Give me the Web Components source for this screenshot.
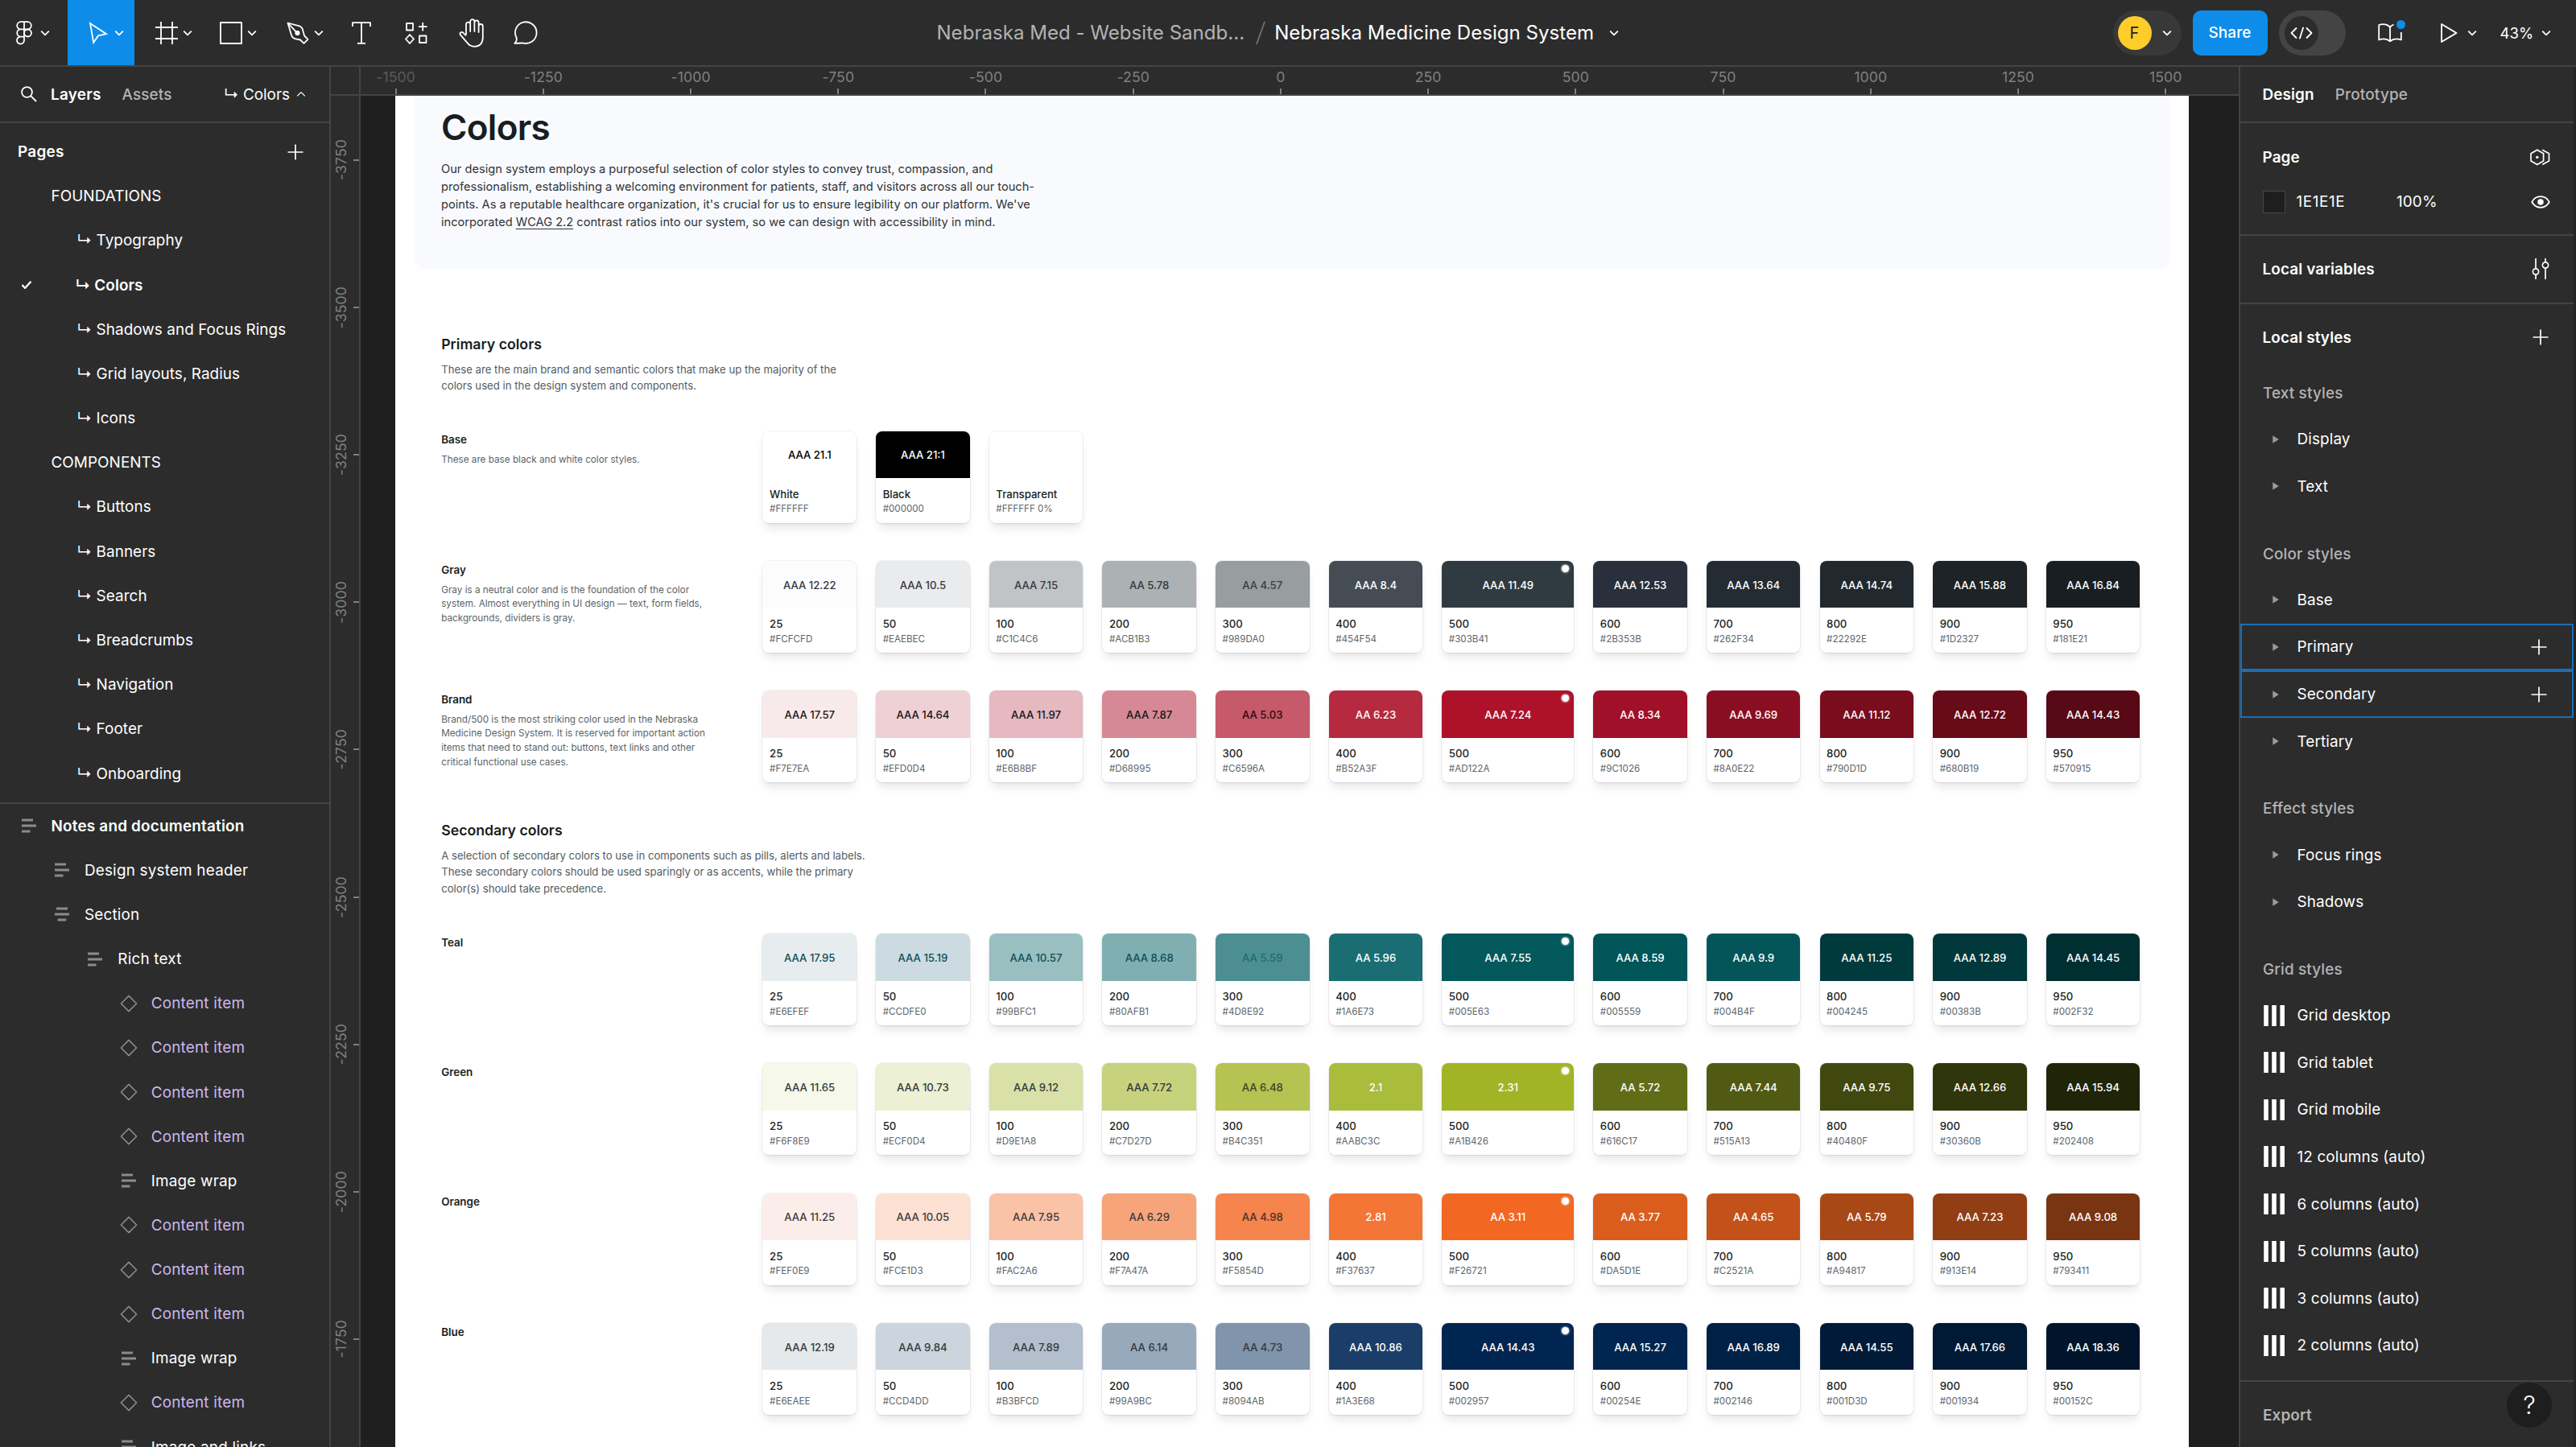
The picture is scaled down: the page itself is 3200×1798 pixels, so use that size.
<!DOCTYPE html>
<html lang="en">
<head>
<meta charset="utf-8">
<title>Nebraska Medicine Design System</title>
<style>
  html, body { margin: 0; height: 100%; background: #2c2c2c; overflow: hidden; }
  body { font-family: Inter, "Liberation Sans", sans-serif; font-size: 18.9px; letter-spacing: .12px; color: #fff; }
</style>
</head>
<body>
<design-app></design-app>

<script>
const icons = {
  logo: [20, 30, '<path d="M10 1.2H5.8a4.4 4.4 0 0 0 0 9.2H10zM10 1.2h4.2a4.4 4.4 0 0 1 0 9.2H10zM10 10.4H5.8a4.4 4.4 0 0 0 0 9.2H10zM10 19.6H5.8a4.5 4.5 0 1 0 4.2 4.6z"/><circle cx="14.5" cy="15" r="4.5"/>', 1.8],
  chevron: [12, 12, '<path d="M1.2 3.6 6 8.4l4.8-4.8"/>', 1.8],
  caretup: [12, 12, '<path d="M1.2 8.4 6 3.6l4.8 4.8"/>', 1.3],
  move: [24, 28, '<path d="M2 2 22 15.2 12 17.4 6.2 26z" stroke-linejoin="miter"/>', 1.8],
  frame: [28, 28, '<path d="M7 0v28M21 0v28M0 7h28M0 21h28"/>', 1.8],
  rect: [28, 28, '<path d="M1 1h26v26H1z"/>', 1.8],
  pen: [28, 28, '<path d="M1.5 1.5 15 5.2c2.7.7 4.4 2.3 5.1 5l2 7.3 4.4 4.4-5 5-4.4-4.400-5.800-1.200c-3-.6-4.600-2.200-5.400-5z"/><path d="M2 2l9.800 10.600"/><circle cx="13.500" cy="14" r="2.200" fill="currentColor"/>', 1.8],
  text: [24, 28, '<path d="M1 6V1.200h22V6M12 1.200v25.600M7 26.800h10"/>', 1.8],
  parts: [28, 28, '<path d="M2 2h8v8.500H2zM18 17.500h8.500V26H18zM22.200 1v10.500M17 6.200h10.500M6 16l5 5.500-5 5.500-5-5.500z"/>', 1.8],
  hand: [31, 36, '<path d="M9 20V7.200a2.600 2.600 0 0 1 5.200 0V16 3.800a2.600 2.600 0 0 1 5.200 0V16 5a2.600 2.600 0 0 1 5.200 0v12V9.600a2.600 2.600 0 0 1 5.200 0v14.200c0 6.600-4 11-10.300 11-4.300 0-7.300-1.900-9.300-5L1.800 20.200c-1.200-2.600 1.800-4.600 3.800-2.300L9 21.500"/>', 1.8],
  comment: [32, 30, '<path d="M1.200 27.800C3.400 25.800 4.200 24 3.800 21.300A13.300 13.300 0 1 1 11.300 27.300C8.500 27.600 5 27.800 1.200 27.800z"/>', 1.8],
  code: [28, 16, '<path d="M8 1.500 1.500 8 8 14.500M20 1.500 26.500 8 20 14.500M16.300.8l-4.600 14.400"/>', 1.8],
  book: [30, 24, '<path d="M15 5v16.500M15 5C12.500 1 6 .2 1.200 2v18.500c5-1.800 10.500-1.200 13.800 1.700 3.300-2.900 8.800-3.500 13.800-1.700V11M15 5c1-1.800 2.300-2.800 4.500-3.400"/>', 1.8],
  play: [22, 26, '<path d="M2 2v22L20.500 13z"/>', 1.8],
  search: [20, 20, '<circle cx="7.500" cy="7.500" r="6.400"/><path d="M12.200 12.200 19 19"/>', 1.8],
  plus: [20, 20, '<path d="M10 .5v19M.5 10h19"/>', 1.7],
  check: [14, 12, '<path d="M1.500 6 5 10 12.500 1.800"/>', 2.300],
  variable: [25, 21, '<path d="M8.800 1.200 16.600 5.700v9.400l-7.800 4.500L1 15.100V5.700zM15.200 1.200l8.300 4.500v9.400l-8.300 4.500"/><circle cx="8.800" cy="10.400" r="1.700" fill="currentColor" stroke="none"/>', 1.700],
  eye: [24, 16, '<path d="M1.200 8C3.500 3.800 7.300 1.200 12 1.200S20.500 3.800 22.800 8c-2.300 4.200-6.100 6.800-10.800 6.800S3.500 12.200 1.200 8z"/><circle cx="12" cy="8" r="3.800" fill="currentColor" stroke="none"/>', 1.8],
  sliders: [22, 26, '<path d="M5 0v12.700M5 20.300V26M17 0v4.700M17 12.300V26"/><circle cx="5" cy="16.500" r="3.600"/><circle cx="17" cy="8.500" r="3.600"/>', 1.7],
  stack: [18, 18, '<path d="M0 2h14M0 9h18M0 16h10.500"/>', 3.200, '#8b8b8b'],
  stackmid: [18, 18, '<path d="M2 2h14M0 9h18M3.700 16h10.600"/>', 3.200, '#8b8b8b'],
  diamond: [22, 22, '<path d="M11 1.400 20.600 11 11 20.600 1.400 11z"/>', 1.500, '#8a8d91'],
  disclose: [8, 10, '<path d="M.3.2 7.800 5l-7.500 4.800z" fill="#9c9c9c" stroke="none"/>', 0],
  columns: [28, 26, '<path d="M4 0v26M14 0v26M24.200 0v26"/>', 5.600]
};

function element(name, css, render) {
  customElements.define(name, class extends HTMLElement {
    connectedCallback() {
      if (this.shadowRoot) return;
      const root = this.attachShadow({ mode: 'open' });
      const a = k => this.getAttribute(k);
      root.innerHTML = `<style>*{box-sizing:border-box}${css}</style>${render(a, this)}`;
    }
  });
}

element('ui-icon', ':host{display:inline-flex;flex:none}svg{display:block;overflow:visible}', a => {
  const [w, h, body, sw, color] = icons[a('name')];
  return `<svg width="${w}" height="${h}" viewBox="0 0 ${w} ${h}" fill="none" stroke="${color || 'currentColor'}" stroke-width="${sw}" stroke-linejoin="round">${body}</svg>`;
});

/* ---------- Top toolbar ---------- */

element('tool-button', `
  :host{display:flex;align-items:center;height:82px;flex:none}
  :host([active]){background:#0d8de9;height:81px;align-self:flex-start}
  .i{width:40px;display:flex;justify-content:center}
`, a => `<span class="i"><ui-icon name="${a('icon')}"></ui-icon></span>${a('menu') !== null ? '<ui-icon name="chevron"></ui-icon>' : ''}`);

element('top-bar', `
  :host{display:flex;align-items:center;height:83px;border-bottom:2px solid #444;flex:none;background:#2c2c2c}
  .tools{display:flex;height:81px;align-items:center;width:1163.500px;flex:none}
  .logo{width:84px;padding-left:10px}
  .t2{width:82.700px;padding-left:18px}
  .m{padding-left:20px}
  .t1{width:68.500px;padding-left:14px}
  .title{display:flex;align-items:center;font-size:24px;letter-spacing:.040px;flex:1;white-space:nowrap}
  .title .p{color:#b3b3b3}
  .title svg{margin:0 11px 0 14px;flex:none}
  .title ui-icon{margin-left:19px}
  .right{display:flex;align-items:center;height:81px;width:575.500px;flex:none}
  .avatar{display:flex;align-items:center;width:85px;height:56px;border-radius:28px;background:#383838;padding-left:6px}
  .avatar b{width:42px;height:42px;border-radius:50%;background:#ffcd29;color:#1e1e1e;font-weight:400;display:flex;align-items:center;justify-content:center;font-size:20px}
  .avatar ui-icon{margin-left:13px}
  .share{margin-left:14px;width:93px;height:56px;border-radius:10px;background:#0d8de9;display:flex;align-items:center;justify-content:center;font-weight:500}
  .dev{margin-left:14px;width:83px;height:56px;border-radius:28px;background:#444;display:flex;align-items:center;padding-left:7px}
  .dev span{width:42px;height:42px;border-radius:50%;background:#2c2c2c;display:flex;align-items:center;justify-content:center}
  .book{position:relative;display:flex;margin-left:40px}
  .book i{position:absolute;left:23px;top:-4px;width:11px;height:11px;border-radius:50%;background:#0d8de9;box-shadow:0 0 0 2px #2c2c2c}
  .play{display:flex;align-items:center;margin-left:47px;gap:12px}
  .zoom{display:flex;align-items:center;margin-left:29px;gap:10px;font-size:18.500px}
`, () => `
  <div class="tools">
    <tool-button class="logo" icon="logo" menu></tool-button>
    <tool-button class="t2" icon="move" menu active></tool-button>
    <tool-button class="t2 m" icon="frame" menu></tool-button>
    <tool-button class="t2" icon="rect" menu></tool-button>
    <tool-button class="t2" icon="pen" menu></tool-button>
    <tool-button class="t1" icon="text"></tool-button>
    <tool-button class="t1" icon="parts"></tool-button>
    <tool-button class="t1" icon="hand"></tool-button>
    <tool-button class="t1" icon="comment"></tool-button>
  </div>
  <div class="title">
    <span class="p">Nebraska Med - Website Sandb...</span>
    <svg width="12" height="30" viewBox="0 0 12 30"><path d="M11 1 1 29" stroke="#757575" stroke-width="1.700"/></svg>
    <span>Nebraska Medicine Design System</span>
    <ui-icon name="chevron"></ui-icon>
  </div>
  <div class="right">
    <div class="avatar"><b>F</b><ui-icon name="chevron"></ui-icon></div>
    <div class="share">Share</div>
    <div class="dev"><span><ui-icon name="code"></ui-icon></span></div>
    <div class="book"><ui-icon name="book"></ui-icon><i></i></div>
    <div class="play"><ui-icon name="play"></ui-icon><ui-icon name="chevron"></ui-icon></div>
    <div class="zoom"><span>43%</span><ui-icon name="chevron"></ui-icon></div>
  </div>`);

/* ---------- Left panel ---------- */

element('page-row', `
  :host{display:flex;align-items:center;height:55.180px;white-space:pre;letter-spacing:.060px}
  .mark{width:26px;margin-left:26px;display:flex;height:12px}
  :host([level="0"]) .t{margin-left:11.500px}
  :host([level="1"]) .t{margin-left:43.500px}
  :host([current]) .t{margin-left:41.500px;font-weight:600}
`, a => `<span class="mark">${a('current') !== null ? '<ui-icon name="check"></ui-icon>' : ''}</span><span class="t"><slot></slot></span>`);

element('layer-row', `
  :host{display:flex;align-items:center;height:55.150px;white-space:nowrap;letter-spacing:.200px;flex:none}
  .i{width:22px;display:flex;margin-right:17px}
  :host([icon="diamond"]){color:#ccb7ec}
`, a => {
  const left = 24.5 + a('depth') * 41.4;
  return `<span class="i" style="margin-left:${left}px;padding-left:${a('icon') === 'diamond' ? 0 : 2}px"><ui-icon name="${a('icon')}"></ui-icon></span><slot></slot>`;
});

element('left-panel', `
  :host{display:flex;flex-direction:column;width:411px;flex:none;border-right:2px solid #444;overflow:hidden}
  .tabs{height:70px;border-bottom:2px solid #444;display:flex;align-items:center;padding:0 29px 0 26px;flex:none}
  .tabs b{font-weight:600;margin-left:17px;letter-spacing:.250px}
  .tabs .a{font-weight:500;color:#b3b3b3;margin-left:26px}
  .tabs .c{margin-left:auto;margin-right:8px;letter-spacing:0}
  .pages{padding:8px 0 8px;border-bottom:2px solid #444;flex:none}
  .head{height:55.200px;display:flex;align-items:center;justify-content:space-between;padding:0 32px 0 22px;font-weight:600;letter-spacing:.300px}
`, () => {
  const pages = ['Typography', 'Colors', 'Shadows and Focus Rings', 'Grid layouts, Radius', 'Icons'];
  const parts = ['Buttons', 'Banners', 'Search', 'Breadcrumbs', 'Navigation', 'Footer', 'Onboarding'];
  const row = t => `<page-row level="1"${t === 'Colors' ? ' current' : ''}>↳ ${t}</page-row>`;
  const D = ['diamond', 3, 'Content item'], W = ['stack', 3, 'Image wrap'];
  const layers = [['stack', 1, 'Design system header'], ['stackmid', 1, 'Section'], ['stack', 2, 'Rich text'], D, D, D, D, W, D, D, D, W, D, ['stack', 3, 'Image and links']];
  return `
  <div class="tabs"><ui-icon name="search"></ui-icon><b>Layers</b><span class="a">Assets</span><span class="c">↳ Colors</span><ui-icon name="caretup"></ui-icon></div>
  <div class="pages">
    <div class="head"><span>Pages</span><ui-icon name="plus"></ui-icon></div>
    <page-row level="0">FOUNDATIONS</page-row>${pages.map(row).join('')}
    <page-row level="0">COMPONENTS</page-row>${parts.map(row).join('')}
  </div>
  <layer-row icon="stack" depth="0" style="font-weight:600">Notes and documentation</layer-row>
  ${layers.map(([i, d, t]) => `<layer-row icon="${i}" depth="${d}">${t}</layer-row>`).join('')}`;
});

/* ---------- Rulers ---------- */

element('ruler-x', `
  :host{display:flex;height:36px;border-bottom:2px solid #444;flex:none;overflow:hidden;font-size:17.600px;color:#808080;background:#2c2c2c}
  span{width:183.220px;flex:none;display:flex;flex-direction:column;align-items:center;justify-content:space-between;padding-top:1px}
  span:first-of-type{margin-left:-48px;color:#5a5a5a}
  em{font-style:normal;line-height:23px}
  i{width:2px;height:7px;background:#808080}
`, () => Array.from({ length: 13 }, (_, k) => `<span><em>${(k - 6) * 250}</em><i></i></span>`).join(''));

element('ruler-y', `
  :host{display:flex;flex-direction:column;width:37px;border-right:2px solid #444;flex:none;overflow:hidden;font-size:17.600px;color:#808080;background:#2c2c2c}
  span{height:183.200px;flex:none;display:flex;align-items:center;justify-content:space-between;padding-left:1px}
  span:first-of-type{margin-top:-12px}
  em{font-style:normal;writing-mode:vertical-rl;transform:rotate(180deg);line-height:23px;width:23px}
  i{height:2px;width:7px;background:#808080}
`, () => Array.from({ length: 10 }, (_, k) => `<span><em>${-3750 + k * 250}</em><i></i></span>`).join(''));

/* ---------- Artboard ---------- */

element('swatch-card', `
  :host{display:flex;flex-direction:column;width:116.600px;height:114px;border-radius:8px;overflow:hidden;background:#fff;flex:none;position:relative;
    box-shadow:0 0 0 1px rgba(16,24,40,.060),0 9px 12px -3px rgba(16,24,40,.100),0 3px 4px -2px rgba(16,24,40,.050)}
  :host([wide]){width:164px}
  .c{height:58.500px;display:flex;align-items:center;justify-content:center;font-weight:500;font-size:13.150px;padding-top:1px;flex:none}
  .m{padding:9.500px 0 0 8.600px}
  b{display:block;font-weight:500;font-size:13.150px;line-height:20px;color:#181e21}
  p{margin:0;padding-top:.800px;font-size:11.600px;line-height:17.600px;color:#5d666c;letter-spacing:0}
  i{position:absolute;right:6px;top:5px;width:9px;height:9px;border-radius:50%;background:#fff;box-shadow:0 0 2px 1px rgba(255,255,255,.5)}
`, a => `<div class="c" style="background:${a('fill')};color:${a('ink')}">${a('ratio') || ''}</div><div class="m"><b>${a('name')}</b><p>${a('hex')}</p></div>${a('wide') !== null ? '<i></i>' : ''}`);

const levels = [25, 50, 100, 200, 300, 400, 500, 600, 700, 800, 900, 950];
const palettes = {
  gray: ['#34393e', '#3a3e42', 'FCFCFD:AAA 12.22 EAEBEC:AAA 10.5 C1C4C6:AAA 7.15 ACB1B3:AA 5.78 989DA0:AA 4.57 454F54:AAA 8.4 303B41:AAA 11.49 2B353B:AAA 12.53 262F34:AAA 13.64 22292E:AAA 14.74 1D2327:AAA 15.88 181E21:AAA 16.84', { 5: '#454c54', 7: '#292f3b', 8: '#242b33' }],
  brand: ['#151518', '#2e0a10', 'F7E7EA:AAA 17.57 EFD0D4:AAA 14.64 E6B8BF:AAA 11.97 D68995:AAA 7.87 C6596A:AA 5.03 B52A3F:AA 6.23 AD122A:AAA 7.24 9C1026:AA 8.34 8A0E22:AAA 9.69 790D1D:AAA 11.12 680B19:AAA 12.72 570915:AAA 14.43', { 0: '#f8eaea', 7: '#a01028' }],
  teal: ['#0d4f58', '#196f73', 'E6EFEF:AAA 17.95 CCDFE0:AAA 15.19 99BFC1:AAA 10.57 80AFB1:AAA 8.68 4D8E92:AA 5.59 1A6E73:AA 5.96 005E63:AAA 7.55 005559:AAA 8.59 004B4F:AAA 9.9 004245:AAA 11.25 00383B:AAA 12.89 002F32:AAA 14.45', { 0: '#e7ecef', 1: '#ccdbe1', 6: '#03585c', 8: '#035559', 9: '#003a3c' }],
  green: ['#303b41', '#3c4628', 'F6F8E9:AAA 11.65 ECF0D4:AAA 10.73 D9E1A8:AAA 9.12 C7D27D:AAA 7.72 B4C351:AA 6.48 AABC3C:2.1 A1B426:2.31 616C17:AA 5.72 515A13:AAA 7.44 40480F:AAA 9.75 30360B:AAA 12.66 202408:AAA 15.94', {}],
  orange: ['#3a3a3f', '#4a2f2c', 'FEF0E9:AAA 11.25 FCE1D3:AAA 10.05 FAC2A6:AAA 7.95 F7A47A:AA 6.29 F5854D:AA 4.98 F37637:2.81 F26721:AA 3.11 DA5D1E:AA 3.77 C2521A:AA 4.65 A94817:AA 5.79 913E14:AAA 7.23 793411:AAA 9.08', { 0: '#fbeeea' }],
  blue: ['#303b41', '#303b48', 'E6EAEE:AAA 12.19 CCD4DD:AAA 9.84 B3BFCD:AAA 7.89 99A9BC:AA 6.14 8094AB:AA 4.73 1A3E68:AAA 10.86 002957:AAA 14.43 00254E:AAA 15.27 002146:AAA 16.89 001D3D:AAA 14.55 001934:AAA 17.66 00152C:AAA 18.36', { 0: '#e5e9ec', 6: '#002550', 9: '#001a38' }]
};

function cards(key) {
  if (key === 'base') return `
    <swatch-card fill="#fff" ink="#000" ratio="AAA 21.1" name="White" hex="#FFFFFF"></swatch-card>
    <swatch-card fill="#000" ink="#fff" ratio="AAA 21:1" name="Black" hex="#000000"></swatch-card>
    <swatch-card fill="transparent" ink="#000" name="Transparent" hex="#FFFFFF 0%"></swatch-card>`;
  const [ink, ink300, data, shade] = palettes[key];
  return data.split(/ (?=[0-9A-F]{6}:)/).map((entry, k) => {
    const hex = '#' + entry.slice(0, 6), ratio = entry.slice(7);
    const color = k > 4 ? '#fff' : k === 4 ? ink300 : ink;
    return `<swatch-card fill="${shade[k] || hex}" ink="${color}" ratio="${ratio}" name="${levels[k]}" hex="${hex}"${k === 6 ? ' wide' : ''}></swatch-card>`;
  }).join('');
}

element('palette-row', `
  :host{display:flex;height:161.200px}
  .d{width:399.300px;flex:none;white-space:nowrap}
  h3{margin:0;font-size:13.400px;font-weight:600;line-height:20px;color:#181e21;padding-top:.800px}
  p{margin:7px 0 0;font-size:11.730px;line-height:17.600px;color:#5a646a;letter-spacing:0}
  .s{display:flex;gap:24.040px}
`, a => `<div class="d"><h3>${a('name')}</h3><p><slot></slot></p></div><div class="s">${cards(a('palette'))}</div>`);

element('section-title', `
  :host{display:block}
  h2{margin:0;font-size:17.700px;font-weight:600;line-height:26px;color:#181e21;letter-spacing:0}
  p{margin:7.500px 0 0;font-size:13.200px;line-height:20.500px;color:#535d63}
`, a => `<h2>${a('name')}</h2><p><slot></slot></p>`);

element('art-board', `
  :host{display:flex;flex-direction:column;width:2228px;margin-left:42.500px;background:#fff;color:#303b41;overflow:hidden;letter-spacing:0;flex:none}
  header{margin:0 23px 0 24px;height:214.500px;background:#f9fafe;border-radius:0 0 14px 14px;padding-left:33.500px;flex:none}
  h1{margin:0;font-size:44px;line-height:52px;font-weight:600;letter-spacing:-.700px;color:#181e21;padding-top:12.500px}
  header p{margin:15px 0 0;font-size:14.630px;line-height:22px;color:#303438}
  header u{text-underline-offset:3px}
  main{padding:81.500px 0 0 57.700px}
  section-title{height:120.700px}
  .b{height:141px}
  .w{letter-spacing:-.025px}
`, () => `
  <header><h1>Colors</h1>
    <p>Our design system employs a purposeful selection of color styles to convey trust, compassion, and<br>professionalism, establishing a welcoming environment for patients, staff, and visitors across all our touch-<br>points. As a reputable healthcare organization, it's crucial for us to ensure legibility on our platform. We've<br>incorporated <u>WCAG 2.2</u> contrast ratios into our system, so we can design with accessibility in mind.</p></header>
  <main>
    <section-title name="Primary colors">These are the main brand and semantic colors that make up the majority of the<br>colors used in the design system and components.</section-title>
    <palette-row name="Base" palette="base">These are base black and white color styles.</palette-row>
    <palette-row name="Gray" palette="gray">Gray is a neutral color and is the foundation of the color<br>system. Almost everything in UI design — text, form fields,<br>backgrounds, dividers is gray.</palette-row>
    <palette-row name="Brand" palette="brand">Brand/500 is the most striking color used in the Nebraska<br>Medicine Design System. It is reserved for important action<br>items that need to stand out: buttons, text links and other<br>critical functional use cases.</palette-row>
    <section-title class="b w" name="Secondary colors">A selection of secondary colors to use in components such as pills, alerts and labels.<br>These secondary colors should be used sparingly or as accents, while the primary<br>color(s) should take precedence.</section-title>
    <palette-row name="Teal" palette="teal"></palette-row>
    <palette-row name="Green" palette="green"></palette-row>
    <palette-row name="Orange" palette="orange"></palette-row>
    <palette-row name="Blue" palette="blue"></palette-row>
  </main>`);

/* ---------- Right panel ---------- */

element('style-row', `
  :host{display:flex;align-items:center;height:58.570px;padding:0 33px 0 27.500px;white-space:nowrap}
  :host([target]){outline:2px solid #1c6eb5;outline-offset:-2px}
  .i{width:43px;display:flex}
  .i.d{padding-left:12px}
  .p{margin-left:auto;display:flex}
`, a => `<span class="i ${a('icon') === 'disclose' ? 'd' : ''}"><ui-icon name="${a('icon')}"></ui-icon></span><slot></slot>${a('target') !== null ? '<span class="p"><ui-icon name="plus"></ui-icon></span>' : ''}`);

element('style-group', `
  :host{display:block}
  .h{height:56px;display:flex;align-items:center;padding-left:28px;font-weight:500;color:#b3b3b3;letter-spacing:.150px}
  .b{padding-bottom:26.500px}
`, a => `<div class="h">${a('name')}</div><div class="b"><slot></slot></div>`);

element('right-panel', `
  :host{display:flex;flex-direction:column;width:419px;flex:none;border-left:2px solid #444;padding-right:3px;background:linear-gradient(to left,#242424 3px,#2c2c2c 3px);white-space:nowrap}
  .tabs{height:70px;border-bottom:2px solid #444;display:flex;align-items:center;padding-left:27.500px;flex:none}
  b{font-weight:600}
  .tabs span{font-weight:500;color:#b3b3b3;margin-left:26px;letter-spacing:.200px}
  .page{height:139.500px;border-bottom:2px solid #444;padding:15px 29px 0 27.500px;flex:none}
  .row{display:flex;align-items:center;height:55px;justify-content:space-between}
  .fill{display:flex;align-items:center}
  .sw{width:28px;height:28px;background:#1e1e1e;border:1px solid #484848;margin-right:14px}
  .hex{width:124.500px;letter-spacing:.600px}
  .row.v{height:85px;border-bottom:2px solid #444;padding:0 30px 0 27.500px;flex:none}
  .row.s{height:83px;padding:0 31.500px 0 27.500px;flex:none}
  .groups{flex:none}
  .export{border-top:2px solid #444;flex:1;margin-top:-12.800px;padding:29px 25px 0 28px;display:flex;justify-content:space-between;align-items:flex-start;color:#b3b3b3;font-weight:600;line-height:26px}
  .help{width:56px;height:56px;border-radius:50%;background:#1e1e1e;color:#fff;display:flex;align-items:center;justify-content:center;font-size:31px;font-weight:300;margin-top:-28px;margin-right:2px}
`, () => {
  const r = (t, x = '') => `<style-row icon="disclose" ${x}>${t}</style-row>`;
  const g = t => `<style-row icon="columns">${t}</style-row>`;
  return `
  <div class="tabs"><b>Design</b><span>Prototype</span></div>
  <div class="page">
    <div class="row"><b>Page</b><ui-icon name="variable"></ui-icon></div>
    <div class="row"><div class="fill"><div class="sw"></div><div class="hex">1E1E1E</div><span>100%</span></div><ui-icon name="eye"></ui-icon></div>
  </div>
  <div class="row v"><b>Local variables</b><ui-icon name="sliders"></ui-icon></div>
  <div class="row s"><b>Local styles</b><ui-icon name="plus"></ui-icon></div>
  <div class="groups">
    <style-group name="Text styles">${r('Display')}${r('Text')}</style-group>
    <style-group name="Color styles">${r('Base')}${r('Primary', 'target')}${r('Secondary', 'target')}${r('Tertiary')}</style-group>
    <style-group name="Effect styles">${r('Focus rings')}${r('Shadows')}</style-group>
    <style-group name="Grid styles">${['Grid desktop', 'Grid tablet', 'Grid mobile', '12 columns (auto)', '6 columns (auto)', '5 columns (auto)', '3 columns (auto)', '2 columns (auto)'].map(g).join('')}</style-group>
  </div>
  <div class="export"><span>Export</span><div class="help">?</div></div>`;
});

/* ---------- Shell ---------- */

element('design-app', `
  :host{display:flex;flex-direction:column;width:3200px;height:1798px;overflow:hidden;background:#2c2c2c}
  .body{display:flex;flex:1;min-height:0}
  .canvas{display:flex;flex-direction:column;flex:1;min-width:0}
  .xrow{display:flex;flex:none;height:36px}
  .corner{width:37px;border-right:2px solid #444;border-bottom:2px solid #444;flex:none}
  ruler-x{flex:1;min-width:0}
  .stage{display:flex;flex:1;min-height:0;overflow:hidden;background:#1e1f1e}
`, () => `
  <top-bar></top-bar>
  <div class="body">
    <left-panel></left-panel>
    <div class="canvas">
      <div class="xrow"><div class="corner"></div><ruler-x></ruler-x></div>
      <div class="stage"><ruler-y></ruler-y><art-board></art-board></div>
    </div>
    <right-panel></right-panel>
  </div>`);
</script>
</body>
</html>
